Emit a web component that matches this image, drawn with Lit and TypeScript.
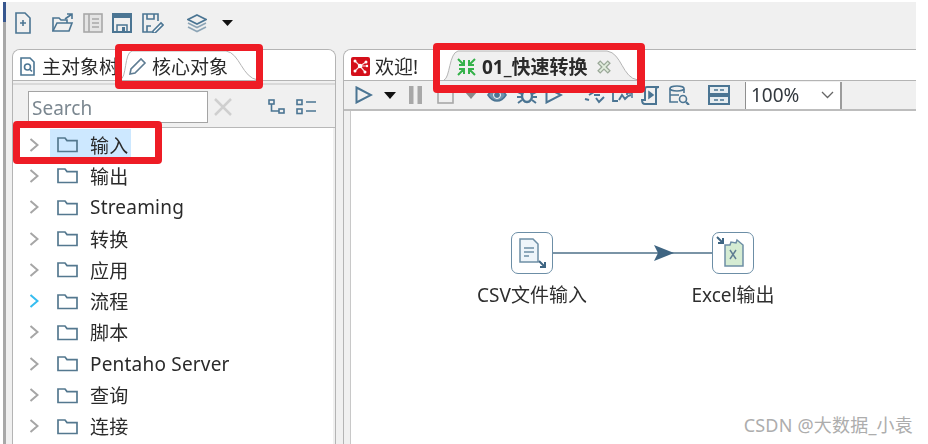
import { LitElement, html, css, svg } from "lit";
import { customElement } from "lit/decorators.js";

const B = "#4b7593";
const ic = (w: number, h: number, cls: string, body: unknown) => html`<svg class=${cls} width=${w} height=${h} viewBox="0 0 ${w} ${h}" fill="none" stroke=${B} stroke-width="1.6">${body}</svg>`;

const folder = html`<svg class="folder" width="21" height="17" viewBox="0 0 21 17" fill="none" stroke="#54788f" stroke-width="1.7"><path d="M1 15.500V2h7l2 2.600h10v10.900z"/></svg>`;
const chevron = html`<svg class="chev" width="10" height="14" viewBox="0 0 10 14" fill="none" stroke="currentColor" stroke-width="2"><path d="M1.500 1l7 6-7 6"/></svg>`;

const rows = ["输入", "输出", "Streaming", "转换", "应用", "流程", "脚本", "Pentaho Server", "查询", "连接"];

@customElement("app-root")
export class AppRoot extends LitElement {
  static styles = css`
    :host { display: block; width: 928px; height: 444px; overflow: hidden; position: relative; background: #fff;
      font-family: "Noto Sans", "Noto Sans CJK SC", sans-serif; font-size: 19px; color: #2a2a2a; }
    .shell { display: flex; height: 444px; padding-top: 2px; box-sizing: border-box; filter: blur(0.45px); }
    .rail { width: 3px; margin-left: 3px; background: linear-gradient(#37578f 0 20px, #a8a8a8 20px); flex: none; }
    .content { width: 910px; background: #f0f0f0; display: flex; flex-direction: column; }
    .top { height: 47px; flex: none; display: flex; align-items: center; padding: 0 0 6px 9px; box-sizing: border-box; }
    .top svg { flex: none; }
    .m21 { margin-left: 21px; } .m9 { margin-left: 9px; } .m10 { margin-left: 10px; } .m23 { margin-left: 23px; } .m15 { margin-left: 15px; }
    .m11 { margin-left: 11px; } .m13 { margin-left: 13px; } .m8 { margin-left: 8px; } .m6 { margin-left: 6px; }
    .m7 { margin-left: 7px; } .m18 { margin-left: 18px; } .m36 { margin-left: 36px; }
    .main { flex: 1; display: flex; gap: 7px; padding-left: 6px; min-height: 0; }
    .panel { border: 1px solid #b4b4b4; border-bottom: none; border-radius: 8px 8px 0 0; display: flex; flex-direction: column; box-sizing: border-box; min-height: 0; overflow: hidden; background: #f0f0f0; }
    .left { width: 324px; flex: none; }
    .right { flex: 1; border-right: none; border-top-right-radius: 0; }
    .tabs { height: 30px; flex: none; background: #fff; border-bottom: 1px solid #b4b4b4; display: flex; align-items: center; position: relative; }
    .tab { display: flex; align-items: center; height: 30px; white-space: nowrap; position: relative; line-height: 30px; padding-top: 3px; box-sizing: border-box; flex: none; }
    .tab svg { flex: none; }
    .tab > span, .tab > svg.i { position: relative; }
    .tab svg.shape { position: absolute; left: 0; top: 0; }
    .t-main { padding-left: 7px; width: 107px; overflow: hidden; }
    .t-main span { margin-left: 7px; }
    .t-core { width: 145px; padding-left: 8px; }
    .t-core span { margin-left: 5px; }
    .t-wel { padding-left: 7px; width: 100px; }
    .t-wel span { margin-left: 5px; }
    .t-fast { width: 196px; padding-left: 13px; font-weight: 700; }
    .t-fast span { margin-left: 6px; }
    .t-fast svg.x { position: relative; margin-left: 9px; }
    .bar { height: 45px; flex: none; border-top: 2px solid #d9d9d9; margin-top: 2px; border-bottom: 1px solid #b8b8b8; display: flex; align-items: center; padding: 2px 0 0 15px; box-sizing: border-box; }
    .search { width: 180px; height: 32px; border: 1px solid #a4a4a4; background: #fff; box-sizing: border-box; color: #7b8790; line-height: 33px; padding-left: 3px; flex: none; }
    .list { flex: 1; background: #fff; margin-right: 2px; padding-top: 1px; min-height: 0; overflow: hidden; letter-spacing: .2px; }
    .row { height: 31.3px; display: flex; align-items: center; padding-left: 16px; }
    .chev { color: #a6a6a6; flex: none; }
    .cyan .chev { color: #36bdf0; }
    .sel { margin-left: 11px; display: flex; align-items: center; height: 31px; padding-left: 7px; width: 74px; flex: none; white-space: nowrap; }
    .row.on .sel { background: #cde8ff; }
    .folder { flex: none; margin-right: 12px; }
    .tool { height: 30px; flex: none; border-bottom: 2px solid #bdbdbd; display: flex; align-items: center; padding-left: 11px; box-sizing: border-box; }
    .tool svg { flex: none; }
    .sep { width: 1px; height: 27px; background: #8f8f8f; flex: none; margin-left: 15px; }
    .combo { width: 96px; height: 27px; background: #fff; border-right: 2px solid #9c9c9c; display: flex; align-items: center; justify-content: space-between; box-sizing: border-box; padding: 0 6px 0 5px; color: #33393f; flex: none; }
    .canvas { flex: 1; background: #fff; margin-left: 6px; position: relative; border-left: 1px solid #c8c8c8; min-height: 0; }
    .node { position: absolute; width: 42px; height: 42px; box-sizing: border-box; border: 1.5px solid #6c8ea6; border-radius: 7px; background: #fff; }
    .n1 { left: 160px; top: 121px; } .n2 { left: 361px; top: 121px; }
    .node svg { display: block; }
    .hop { position: absolute; left: 202px; top: 132px; }
    .label { position: absolute; top: 171px; white-space: nowrap; transform: translateX(-50%); color: #2e2e2e; font-size: 19px; line-height: 26px; }
    .l1 { left: 181px; } .l2 { left: 382px; }
    .mark { position: absolute; right: 15px; bottom: 6px; color: #adadad; font-size: 18px; line-height: 26px; white-space: nowrap; letter-spacing: .2px; }
    .red { position: absolute; border: 7px solid #ee1c25; border-radius: 4px; box-sizing: border-box; filter: blur(.3px); }
    .r1 { left: 115px; top: 44px; width: 148px; height: 45px; border-bottom-width: 8px; }
    .r2 { left: 13px; top: 121px; width: 149px; height: 43px; }
    .r3 { left: 433px; top: 43px; width: 212px; height: 50px; border-bottom-width: 8px; border-right-width: 8px; }
  `;

  render() {
    return html`
      <div class="shell">
        <div class="rail"></div>
        <div class="content">
          <div class="top">
            ${ic(16, 22, "", svg`<path d="M1 1h9l5 5v15H1z"/><path d="M5 11h6M8 8v6"/>`)}
            ${ic(22, 20, "m21", svg`<path d="M1 18V5h6l2 2h6v3"/><path d="M1 18l4-8h15l-3 8z"/><path d="M13 6l7-5M15 1h5v5"/>`)}
            ${html`<svg class="m9" width="20" height="20" viewBox="0 0 20 20" fill="#e4e4e4" stroke="#a8a8a8" stroke-width="1.6"><rect x="1" y="1" width="18" height="18"/><path d="M6 1v18M9 6h7M9 10h7M9 14h7"/></svg>`}
            ${ic(20, 20, "m9", svg`<path d="M1 1h18v18H1z" stroke-width="2"/><path d="M1 2h18v3H1z" fill=${B} stroke="none"/><path d="M5 19v-7h10v7" stroke-width="1.500"/><rect x="10" y="14" width="3" height="4" fill=${B} stroke="none"/>`)}
            ${ic(22, 20, "m10", svg`<path d="M14 19H1V1h15v7"/><path d="M5 1v5h7V1M5 19v-6h4"/><path d="M11 18l8-8 2 2-8 8h-2z" fill="#fff"/>`)}
            ${ic(20, 20, "m23", svg`<path d="M10 2l9 4.500-9 4.500-9-4.500z"/><path d="M1 10l9 4.500 9-4.500M1 14l9 4.500 9-4.500" stroke="#8da5b6"/>`)}
            <svg class="m15" width="11" height="6" viewBox="0 0 11 6"><path d="M0 0h11L5.500 6z" fill="#111"/></svg>
          </div>
          <div class="main">
            <section class="panel left">
              <div class="tabs">
                <div class="tab t-main">
                  ${ic(15, 19, "i", svg`<path d="M1 1h9l4 4v13H1z"/><circle cx="7.500" cy="10" r="3"/><path d="M10 12.500l2 2"/>`)}
                  <span>主对象树</span>
                </div>
                <div class="tab t-core">
                  <svg class="shape" width="145" height="31" viewBox="0 0 145 31" fill="#fff" stroke="#b4b4b4"><path d="M0 30C7 28 4 3 12 1H106C120 3 122 28 138 30"/></svg>
                  ${ic(19, 19, "i", svg`<path d="M2 17l1-5L13 2l4 4L7 16z" stroke="#5f7d93"/>`)}
                  <span>核心对象</span>
                </div>
              </div>
              <div class="bar">
                <div class="search">Search</div>
                <svg class="m6" width="18" height="18" viewBox="0 0 18 18" stroke="#cfcfcf" stroke-width="2.500"><path d="M1 1l16 16M17 1L1 17"/></svg>
                ${ic(18, 16, "m36", svg`<rect x="1" y="1" width="5" height="4"/><rect x="11" y="10" width="5" height="4"/><path d="M3.500 5v7H11"/>`)}
                ${ic(21, 16, "m10", svg`<rect x="1" y="1" width="5" height="4.500"/><rect x="1" y="10" width="5" height="4.500"/><path d="M10 3h10M10 12h10"/>`)}
              </div>
              <div class="list">
                ${rows.map((r, i) => html`<div class="row ${i === 0 ? "on" : ""} ${r === "流程" ? "cyan" : ""}">${chevron}<div class="sel">${folder}${r}</div></div>`)}
              </div>
            </section>
            <section class="panel right">
              <div class="tabs">
                <div class="tab t-wel">
                  <svg class="i" width="19" height="19" viewBox="0 0 19 19"><rect width="19" height="19" rx="2" fill="#d40f1a"/><path d="M9 9L4 4M9 9l6-4M9 9l-5 5M9 9l5 6M9 9h7" stroke="#ffd9d9" stroke-width="1.200"/><g fill="#fff"><circle cx="9" cy="9" r="2.200"/><circle cx="4" cy="4" r="1.500"/><circle cx="15" cy="5" r="1.500"/><circle cx="4" cy="14" r="1.500"/><circle cx="14" cy="15" r="1.500"/><circle cx="16" cy="9" r="1.200"/></g></svg>
                  <span>欢迎!</span>
                </div>
                <div class="tab t-fast">
                  <svg class="shape" width="196" height="31" viewBox="0 0 196 31" fill="#f0f0f0" stroke="#b4b4b4"><path d="M0 30C6 28 5 3 14 1H163C178 3 178 28 194 30"/></svg>
                  <svg class="i" width="19" height="18" viewBox="0 0 19 18" fill="none" stroke="#35b24a" stroke-width="2"><path d="M1 1l6 6M7 2v5H2M18 1l-6 6M12 2v5h5M1 17l6-6M7 16v-5H2M18 17l-6-6M12 16v-5h5"/></svg>
                  <span>01_快速转换</span>
                  <svg class="x" width="14" height="14" viewBox="0 0 13 13" fill="#e2eede" stroke="#9aa898" stroke-width="1.200"><path d="M1 3l2-2 3.500 3.500L10 1l2 2-3.500 3.500L12 10l-2 2-3.500-3.500L3 12l-2-2 3.500-3.500z"/></svg>
                </div>
              </div>
              <div class="tool">
                ${ic(18, 18, "", svg`<path d="M1.500 1.500L16 9 1.500 16.500z" stroke-width="2"/>`)}
                <svg class="m11" width="12" height="7" viewBox="0 0 12 7"><path d="M0 0h12L6 7z" fill="#111"/></svg>
                <svg class="m13" width="13" height="18" viewBox="0 0 13 18" fill="#a8a8a8"><rect width="4.500" height="18"/><rect x="8.500" width="4.500" height="18"/></svg>
                <svg class="m15" width="17" height="18" viewBox="0 0 17 18" fill="none" stroke="#a8a8a8" stroke-width="1.600"><rect x="1" y="1" width="15" height="16"/></svg>
                <svg class="m11" width="12" height="7" viewBox="0 0 12 7"><path d="M0 0h12L6 7z" fill="#8a8a8a"/></svg>
                ${ic(20, 14, "m10", svg`<path d="M1 7c5-8 13-8 18 0-5 8-13 8-18 0z" fill="#6f93ad"/><circle cx="10" cy="7" r="3.500" fill=${B} stroke="#fff" stroke-width="1"/>`)}
                ${ic(20, 18, "m10", svg`<ellipse cx="10" cy="10" rx="5" ry="6" stroke-width="2.400"/><path d="M1 6l4 2M19 6l-4 2M0 11h5M20 11h-5M1 17l4-3M19 17l-4-3" stroke-width="2"/>`)}
                ${ic(18, 18, "m8", svg`<path d="M1.500 1.500L16 9 1.500 16.500z" stroke-width="2"/>`)}
                ${ic(21, 18, "m21", svg`<path d="M5 3l5 3-5 3M1 13l4 1M10 9h6M14 4h5M12 12l3 4 5-5" stroke-width="2"/>`)}
                ${ic(21, 18, "m7", svg`<path d="M6 15H1V3h11l3 3v3" stroke-width="1.800"/><path d="M7 14l3-5 3 4 3-3 3-1" stroke-width="2"/><path d="M15 7h5v5" stroke-width="1.500"/>`)}
                ${ic(20, 19, "m8", svg`<path d="M4 18h11V3c0-1 1-2 3-2H6C5 1 4 2 4 3v11H1c0 2 1 4 3 4z" stroke-width="2"/><path d="M8 6l4 3-4 3z" fill=${B}/>`)}
                ${ic(21, 20, "m8", svg`<ellipse cx="8" cy="3.500" rx="7" ry="2.500"/><path d="M1 3.500V17h8M15 4v4M1 10h9"/><circle cx="14" cy="14" r="3.500"/><path d="M17 17l3 3" stroke-width="2.200"/>`)}
                ${ic(22, 20, "m18", svg`<rect x="1" y="1" width="20" height="8" fill="#e6edf1" stroke-width="2"/><rect x="1" y="11" width="20" height="8" fill="#e6edf1" stroke-width="2"/><path d="M6 5h4M12 5h4M6 15h4M12 15h4"/>`)}
                <div class="sep"></div>
                <div class="combo"><span>100%</span>
                  <svg width="13" height="8" viewBox="0 0 13 8" fill="none" stroke="#666" stroke-width="1.300"><path d="M1 1l5.500 5.500L12 1"/></svg>
                </div>
              </div>
              <div class="canvas">
                <svg class="hop" width="160" height="20" viewBox="0 0 160 20"><path d="M0 10H159" stroke="#4e7088" stroke-width="1.600"/><path d="M101 2l20 8-20 8 4-8z" fill="#3f6582"/></svg>
                <div class="node n1">
                  <svg width="39" height="39" viewBox="0 0 39 39" fill="none" stroke="#6d8ea5" stroke-width="1.500"><path d="M8 6h13l5 5v18H8z" fill="#eef5fa"/><path d="M12 15h10M12 19h10M12 23h5"/><path d="M27 28l6 6M33 29v5h-5" stroke="#3f6582" stroke-width="2"/></svg>
                </div>
                <div class="node n2">
                  <svg width="39" height="39" viewBox="0 0 39 39" fill="none" stroke="#6d8ea5" stroke-width="1.500"><path d="M12 12h5l1-3 5 1 1-3 6 5v21H12z" fill="#d5ecd3"/><path d="M17 17l6 9M23 17l-6 9" stroke="#5f7d93"/><path d="M4 4l6 6M10 5v5H5" stroke="#3f6582" stroke-width="2"/></svg>
                </div>
                <div class="label l1">CSV文件输入</div>
                <div class="label l2">Excel输出</div>
              </div>
            </section>
          </div>
        </div>
      </div>
      <div class="red r1"></div>
      <div class="red r2"></div>
      <div class="red r3"></div>
      <div class="mark">CSDN @大数据_小袁</div>
    `;
  }
}
